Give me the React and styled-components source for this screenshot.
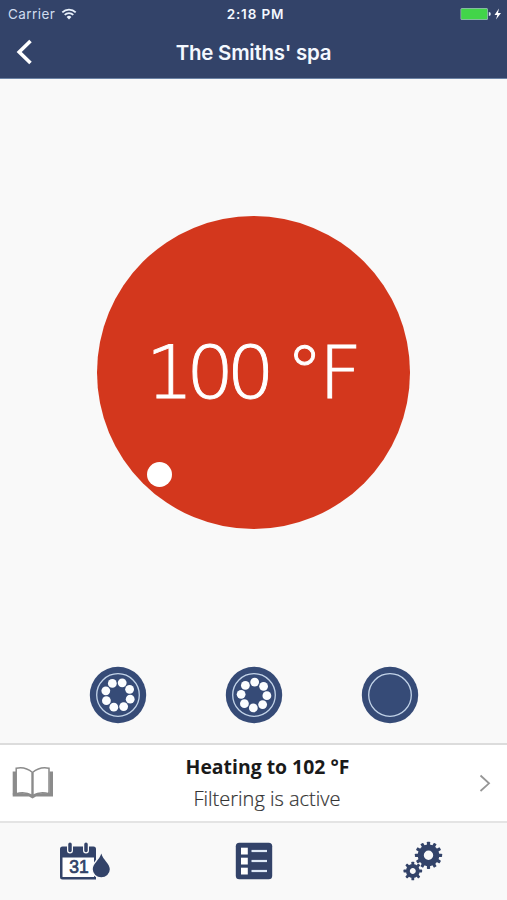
import React from "react";
import styled, { createGlobalStyle } from "styled-components";

const NAVY = "#334369";

const GlobalStyle = createGlobalStyle`
  * { box-sizing: border-box; }
  body {
    margin: 0;
    background: #f9f9f9;
    font-family: Inter, "Liberation Sans", sans-serif;
  }
`;

const WifiIcon = () => (
  <svg width="16" height="12" viewBox="0 0 16 12" fill="none" stroke="#e9f1fb">
    <path d="M1.3 4.4a9.4 9.4 0 0 1 13.4 0" strokeWidth="1.8" />
    <path d="M3.7 6.9a6 6 0 0 1 8.6 0" strokeWidth="1.8" />
    <path d="M5.6 9a3.4 3.4 0 0 1 4.8 0L8 11.6z" fill="#e9f1fb" stroke="none" />
  </svg>
);

const BatteryIcon = () => (
  <svg width="43" height="14" viewBox="0 0 43 14">
    <rect x="0.5" y="1" width="27.5" height="12" rx="1.5" fill="#9bb3bd" />
    <rect x="1.2" y="1.7" width="26.1" height="10.6" rx="1" fill="#42d549" />
    <path d="M28.8 5a2 2 0 0 1 0 4z" fill="#dfeaf4" />
    <path d="M39 1.5 34.5 8h2.8L36 12.5 41 6h-3z" fill="#fff" />
  </svg>
);

const BackIcon = () => (
  <svg width="18" height="28" viewBox="0 0 18 28" fill="none">
    <path d="M14.5 3 3.2 14 14.5 25" stroke="#fff" strokeWidth="3.6" />
  </svg>
);

const JetIcon = ({ dots, turn }) => (
  <svg width="58" height="58" viewBox="-29 -29 58 58">
    <circle r="28.2" fill="#364b77" />
    <circle r="21.3" fill="none" stroke="#c3d4e9" strokeWidth="1.3" />
    {Array.from({ length: dots }, (_, i) => {
      const a = ((turn + i * 45) * Math.PI) / 180;
      return (
        <circle
          key={i}
          cx={12.9 * Math.cos(a)}
          cy={12.9 * Math.sin(a)}
          r="4.4"
          fill="#fbfdff"
        />
      );
    })}
  </svg>
);

const BookIcon = () => (
  <svg width="42" height="34" viewBox="0 0 42 34">
    <path d="M0.7 5.5h3.5v23H0.7zM37.5 5.5h3.5v23h-3.5z" fill="#8b8b8b" />
    <path
      d="M0.7 30.5V27.5C8 26.6 15 26.6 20.5 29.5C26 26.6 33 26.6 41 27.5V30.5H24L20.5 32.5L17 30.5z"
      fill="#8b8b8b"
    />
    <path
      d="M20.5 6.5C15.5 2.2 10 .8 4.2 2.2V27.8C10 26 16 27 20.5 29.5C25 27 31 26 37 27.8V2.2C31 .8 25.5 2.2 20.5 6.5z"
      fill="#fff"
      stroke="#8b8b8b"
      strokeWidth="1.5"
    />
    <path d="M20.5 6.5V31" stroke="#8b8b8b" strokeWidth="2.4" />
  </svg>
);

const CalendarIcon = () => (
  <svg width="52" height="40" viewBox="0 0 52 40">
    <path
      d="M3.5 5.5H34.5a2.5 2.5 0 0 1 2.5 2.5V38.500H3.500a2.500 2.500 0 0 1-2.500-2.500V8a2.500 2.500 0 0 1 2.500-2.500z"
      fill={NAVY}
    />
    <path d="M3.5 16.5H35V36H3.5z" fill="#fff" />
    <path d="M11 3.2V9.5M27 3.2V9.5" stroke="#f9f9f9" strokeWidth="6" strokeLinecap="round" />
    <path d="M11 3.2V9.5M27 3.2V9.5" stroke={NAVY} strokeWidth="3.5" strokeLinecap="round" />
    <text
      x="20"
      y="32.2"
      textAnchor="middle"
      fontFamily="Liberation Sans, sans-serif"
      fontSize="17.5"
      fill={NAVY}
      stroke={NAVY}
      strokeWidth="0.7"
    >
      31
    </text>
    <path
      d="M42.3 12.5C40.5 19 33.8 22.5 33.8 28.3a8.5 8 0 0 0 17 0C50.8 22.5 44 19 42.3 12.5z"
      fill={NAVY}
      stroke="#f9f9f9"
      strokeWidth="3"
      paintOrder="stroke"
    />
  </svg>
);

const ListIcon = () => (
  <svg width="38" height="38" viewBox="0 0 38 38">
    <rect x="0.8" y="0.8" width="36.4" height="36.4" rx="3.5" fill={NAVY} />
    {[5.7, 15.7, 25.7].map((y) => (
      <g key={y}>
        <rect x="6" y={y} width="6.8" height="6.8" fill="#fff" />
        <path d={`M16.5 ${y + 3.3}H32`} stroke="#dde8f7" strokeWidth="2.2" />
      </g>
    ))}
  </svg>
);

const Gear = ({ x, y, teeth, outer, body, hole, tooth }) => (
  <g transform={`translate(${x} ${y})`}>
    <circle r={(body + hole) / 2} fill="none" stroke={NAVY} strokeWidth={body - hole} />
    {Array.from({ length: teeth }, (_, i) => (
      <rect
        key={i}
        x={-tooth / 2}
        y={-outer}
        width={tooth}
        height={outer - body + 1}
        rx="0.6"
        fill={NAVY}
        transform={`rotate(${(i * 360) / teeth})`}
      />
    ))}
  </g>
);

const GearsIcon = () => (
  <svg width="40" height="40" viewBox="0 0 40 40">
    <Gear x={25.5} y={14.3} teeth={12} outer={13.6} body={10.8} hole={4.7} tooth={3.2} />
    <Gear x={9.8} y={30} teeth={8} outer={9.3} body={6.9} hole={3} tooth={2.8} />
  </svg>
);

const Screen = styled.div`
  display: flex;
  flex-direction: column;
  width: 507px;
  height: 900px;
  overflow: hidden;
  background: #f9f9f9;
`;

const Header = styled.header`
  height: 79px;
  background: ${NAVY};
  border-bottom: 1px solid #6c83a5;
  color: #f4f8ff;
`;

const StatusBar = styled.div`
  display: grid;
  grid-template-columns: 1fr auto 1fr;
  align-items: center;
  height: 27px;
  padding: 0 4px 0 8px;
  font-size: 13.5px;
`;

const Carrier = styled.div`
  display: flex;
  align-items: center;
  gap: 6px;
  color: #cfdcef;
  letter-spacing: 0.45px;
`;

const Clock = styled.div`
  font-weight: 600;
  letter-spacing: 0.85px;
`;

const Battery = styled.div`
  display: flex;
  justify-content: flex-end;
`;

const NavBar = styled.div`
  display: grid;
  grid-template-columns: 40px 1fr 40px;
  align-items: center;
  height: 50px;
`;

const BackButton = styled.button`
  display: flex;
  padding: 0 0 0 16px;
  border: 0;
  background: none;
`;

const Title = styled.h1`
  margin: 0;
  text-align: center;
  font-size: 20.5px;
  font-weight: 600;
  letter-spacing: -0.25px;
`;

const Main = styled.main`
  display: flex;
  flex-direction: column;
  align-items: center;
  flex: 1;
  padding-top: 137px;
`;

const Dial = styled.div`
  position: relative;
  display: flex;
  align-items: center;
  justify-content: center;
  width: 313px;
  height: 313px;
  border-radius: 50%;
  background: #d3371d;
`;

const Temperature = styled.div`
  padding-right: 6px;
  color: #fff;
  font-family: "DejaVu Sans Light", "DejaVu Sans", sans-serif;
  font-size: 73px;
  font-weight: 200;
  line-height: 1;
  letter-spacing: -7.2px;
  word-spacing: 2px;
  white-space: nowrap;
  transform: scaleX(1.03);
  -webkit-text-stroke: 0.9px #fff;
`;

const Degree = styled.span`
  letter-spacing: -4.5px;
`;

const Knob = styled.span`
  position: absolute;
  left: 50px;
  top: 246px;
  width: 25px;
  height: 25px;
  border-radius: 50%;
  background: #fff;
`;

const Jets = styled.div`
  display: flex;
  gap: 78px;
  margin-top: 137px;
`;

const StatusRow = styled.section`
  display: grid;
  grid-template-columns: 75px 1fr 60px;
  align-items: center;
  height: 80px;
  padding: 0 0 0 12px;
  background: #fff;
  border-top: 2px solid #dcdcdc;
  border-bottom: 2px solid #e4e4e4;
`;

const StatusText = styled.div`
  display: flex;
  flex-direction: column;
  align-items: center;
  font-family: "Open Sans", sans-serif;
  font-size: 20px;
  line-height: 32px;
  white-space: nowrap;
`;

const Heating = styled.div`
  color: #1a1a1a;
  font-weight: 700;
  transform: scaleX(0.97);
`;

const Filtering = styled.div`
  color: #333;
  font-weight: 300;
  -webkit-text-stroke: 0.2px #333;
`;

const TabBar = styled.nav`
  display: grid;
  grid-template-columns: repeat(3, 1fr);
  place-items: center;
  height: 77px;
  padding-bottom: 2px;
`;

const App = () => {
  return (
    <>
      <GlobalStyle />
      <Screen>
        <Header>
          <StatusBar>
            <Carrier>
              Carrier <WifiIcon />
            </Carrier>
            <Clock>2:18 PM</Clock>
            <Battery>
              <BatteryIcon />
            </Battery>
          </StatusBar>
          <NavBar>
            <BackButton aria-label="Back">
              <BackIcon />
            </BackButton>
            <Title>The Smiths' spa</Title>
          </NavBar>
        </Header>
        <Main>
          <Dial>
            <Temperature>
              100 <Degree>°</Degree>F
            </Temperature>
            <Knob />
          </Dial>
          <Jets>
            <JetIcon dots={8} turn={-26} />
            <JetIcon dots={8} turn={3} />
            <JetIcon dots={0} turn={0} />
          </Jets>
        </Main>
        <StatusRow>
          <BookIcon />
          <StatusText>
            <Heating>Heating to 102 °F</Heating>
            <Filtering>Filtering is active</Filtering>
          </StatusText>
          <svg width="60" height="24" viewBox="0 0 60 24" fill="none">
            <path d="M33.5 4.5 42 12.3 33.5 20" stroke="#969696" strokeWidth="1.8" />
          </svg>
        </StatusRow>
        <TabBar>
          <CalendarIcon />
          <ListIcon />
          <GearsIcon />
        </TabBar>
      </Screen>
    </>
  );
};

export default App;
